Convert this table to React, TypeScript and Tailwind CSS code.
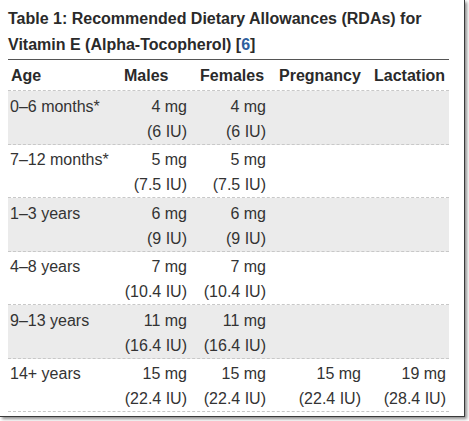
import React from "react";

const rows = [
  { age: "0–6 months*", m: ["4 mg", "(6 IU)"], f: ["4 mg", "(6 IU)"], p: null, l: null },
  { age: "7–12 months*", m: ["5 mg", "(7.5 IU)"], f: ["5 mg", "(7.5 IU)"], p: null, l: null },
  { age: "1–3 years", m: ["6 mg", "(9 IU)"], f: ["6 mg", "(9 IU)"], p: null, l: null },
  { age: "4–8 years", m: ["7 mg", "(10.4 IU)"], f: ["7 mg", "(10.4 IU)"], p: null, l: null },
  { age: "9–13 years", m: ["11 mg", "(16.4 IU)"], f: ["11 mg", "(16.4 IU)"], p: null, l: null },
  { age: "14+ years", m: ["15 mg", "(22.4 IU)"], f: ["15 mg", "(22.4 IU)"], p: ["15 mg", "(22.4 IU)"], l: ["19 mg", "(28.4 IU)"] },
];

const cols = "grid grid-cols-[106px_76px_79px_95px_85px]";

function Val({ v }: { v: string[] | null }) {
  return (
    <div className="text-right pr-[3px]">
      {v ? (
        <>
          <div>{v[0]}</div>
          <div>{v[1]}</div>
        </>
      ) : null}
    </div>
  );
}

export default function App() {
  return (
    <div className="w-[469px] h-[421px] bg-white" style={{ fontFamily: '"Liberation Sans", Arial, sans-serif' }}>
      <div className="w-[465px] h-[417px] bg-white border-r border-b border-[#3a3a3a] shadow-[2px_2px_3px_rgba(0,0,0,0.45)]">
        <div className="ml-[8px] w-[441px]">
          <div className="pt-[6px] pb-[1px] text-[16px] leading-[26px] font-bold text-[#2a2a2a] border-b border-[#555]">
            <div>Table 1: Recommended Dietary Allowances (RDAs) for</div>
            <div>
              Vitamin E (Alpha-Tocopherol) [<span className="text-[#2d5f9e]">6</span>]
            </div>
          </div>
          <div className={`${cols} pt-[3px] pb-[2px] text-[16px] leading-[25px] font-bold text-[#2a2a2a] border-b border-dashed border-[#c8c8c8]`}>
            <div className="pl-[3px]">Age</div>
            <div className="pl-[10px]">Males</div>
            <div className="pl-[10px]">Females</div>
            <div className="pl-[10px]">Pregnancy</div>
            <div className="pl-[10px]">Lactation</div>
          </div>
          {rows.map((r, i) => (
            <div
              key={r.age}
              className={`${cols} pt-[2.5px] text-[16px] leading-[25px] text-[#333] border-b border-dashed border-[#c8c8c8] ${i % 2 === 0 ? "bg-[#ebebeb]" : "bg-white"}`}
            >
              <div className="pl-[2px]">{r.age}</div>
              <Val v={r.m} />
              <Val v={r.f} />
              <Val v={r.p} />
              <Val v={r.l} />
            </div>
          ))}
        </div>
      </div>
    </div>
  );
}
